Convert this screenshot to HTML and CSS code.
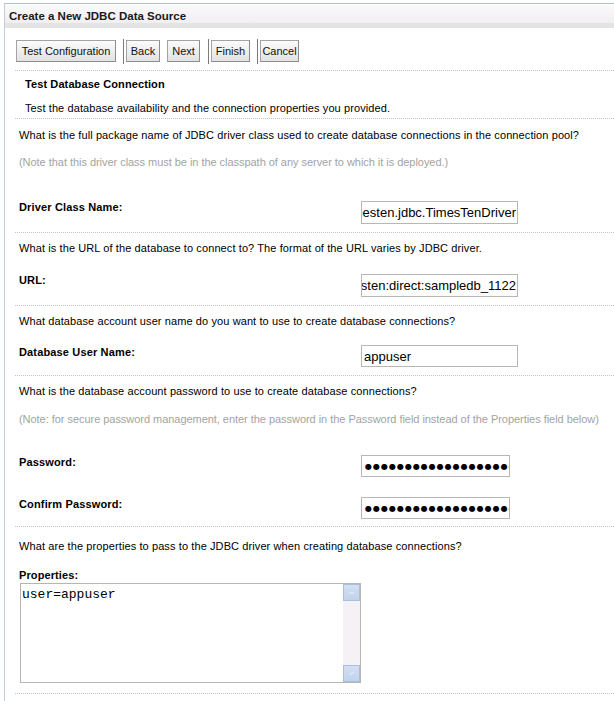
FILE: index.html
```html
<!DOCTYPE html>
<html>
<head>
<meta charset="utf-8">
<link rel="stylesheet" href="styles.css">
</head>
<body>
<div class="panel">
  <div class="titlebar">Create a New JDBC Data Source</div>
  <div class="toolbar">
    <button class="btn w-test">Test Configuration</button>
    <span class="sep"></span>
    <button class="btn w-back">Back</button>
    <button class="btn w-next">Next</button>
    <span class="sep"></span>
    <button class="btn w-finish">Finish</button>
    <span class="sep"></span>
    <button class="btn w-cancel">Cancel</button>
  </div>

  <div class="section intro">
    <div class="line bold">Test Database Connection</div>
    <div class="line gap8">Test the database availability and the connection properties you provided.</div>
  </div>

  <div class="section s1">
    <div class="line">What is the full package name of JDBC driver class used to create database connections in the connection pool?</div>
    <div class="line note gap11">(Note that this driver class must be in the classpath of any server to which it is deployed.)</div>
    <div class="field gap29">
      <div class="label">Driver Class Name:</div>
      <div class="input wide mt2"><span>com.timesten.jdbc.TimesTenDriver</span></div>
    </div>
  </div>

  <div class="section s2">
    <div class="line">What is the URL of the database to connect to? The format of the URL varies by JDBC driver.</div>
    <div class="field gap16">
      <div class="label">URL:</div>
      <div class="input wide mt2"><span>jdbc:timesten:direct:sampledb_1122</span></div>
    </div>
  </div>

  <div class="section s3">
    <div class="line">What database account user name do you want to use to create database connections?</div>
    <div class="field gap15">
      <div class="label">Database User Name:</div>
      <div class="input wide short mt1 left"><span>appuser</span></div>
    </div>
  </div>

  <div class="section s4">
    <div class="line">What is the database account password to use to create database connections?</div>
    <div class="line note gap12">(Note: for secure password management, enter the password in the Password field instead of the Properties field below)</div>
    <div class="field gap27">
      <div class="label">Password:</div>
      <div class="input pw mt1"><span class="dots">●●●●●●●●●●●●●●●●●●●</span></div>
    </div>
    <div class="field gap19">
      <div class="label">Confirm Password:</div>
      <div class="input pw mt1"><span class="dots">●●●●●●●●●●●●●●●●●●●</span></div>
    </div>
  </div>

  <div class="section s5">
    <div class="line">What are the properties to pass to the JDBC driver when creating database connections?</div>
    <div class="line bold gap13">Properties:</div>
    <div class="textarea">
      <div class="ta-text">user=appuser</div>
      <div class="scrollbar">
        <div class="sb-btn"><svg width="15" height="15" viewBox="0 0 15 15"><path d="M5 8h5" stroke="#eef3fb" stroke-width="1"/></svg></div>
        <div class="sb-track"></div>
        <div class="sb-btn"><svg width="15" height="15" viewBox="0 0 15 15"><path d="M6 9l3-3" stroke="#eef3fb" stroke-width="1"/></svg></div>
      </div>
    </div>
  </div>
</div>
</body>
</html>
```

FILE: styles.css
```css
html, body {
  margin: 0;
  padding: 0;
  background: #ffffff;
}
body {
  font-family: "Liberation Sans", Arial, sans-serif;
  font-size: 11px;
  color: #000;
  overflow: hidden;
}
.panel {
  margin: 3px 0 0 4px;
  border-top: 1px solid #b7c3cc;
  border-left: 1px solid #c2ccd5;
  min-height: 700px;
}
.titlebar {
  height: 24px;
  line-height: 24px;
  padding-left: 4px;
  font-weight: bold;
  font-size: 11.5px;
  color: #1a1a1a;
  background: linear-gradient(#fcfcfc 0%, #f6f4f6 35%, #f1eff1 78%, #e4e4e4 79%, #e2e2e2 100%);
}
.toolbar {
  display: flex;
  align-items: flex-start;
  margin-left: 10px;
  padding: 12px 0 0 1px;
  height: 30px;
  border-bottom: 1px dotted #c4c4c4;
}
.btn {
  height: 22px;
  padding: 0;
  font-family: "Liberation Sans", Arial, sans-serif;
  font-size: 11px;
  color: #111;
  border: 1px solid #a3a3a3;
  border-right-color: #8c8c8c;
  border-bottom-color: #8c8c8c;
  background: linear-gradient(#fbfbfb, #ececec 60%, #e2e2e2);
  border-radius: 0;
}
.w-test { width: 100px; margin-right: 7px; }
.w-back { width: 34px; margin-right: 7px; }
.w-next { width: 33px; margin-right: 8px; }
.w-finish { width: 39px; margin-right: 7px; }
.w-cancel { width: 39px; }
.sep {
  width: 1px;
  height: 25px;
  margin-top: -1px;
  margin-right: 2px;
  background: #7a7a7a;
}
.section {
  margin-left: 10px;
  padding-left: 4px;
  border-bottom: 1px dotted #c4c4c4;
  letter-spacing: 0.1px;
}
.line {
  line-height: 17px;
  height: 16px;
  white-space: nowrap;
}
.bold { font-weight: bold; }
.note { color: #a3a3a3; letter-spacing: -0.04px; }
.intro { padding: 5px 0 2px 10px; }
.s1 { padding-top: 8px; padding-bottom: 8px; }
.s2 { padding-top: 7px; padding-bottom: 8px; }
.s3 { padding-top: 7px; padding-bottom: 8px; }
.s4 { padding-top: 7px; padding-bottom: 7px; }
.s5 { padding-top: 11px; padding-bottom: 10px; }
.gap8 { margin-top: 8px; }
.gap11 { margin-top: 11px; }
.gap12 { margin-top: 12px; }
.gap13 { margin-top: 13px; }
.gap15 { margin-top: 15px; }
.gap16 { margin-top: 16px; }
.gap19 { margin-top: 19px; }
.gap27 { margin-top: 27px; }
.gap29 { margin-top: 29px; }
.field {
  display: flex;
  align-items: flex-start;
}
.label {
  width: 342px;
  line-height: 17px;
  height: 16px;
  font-weight: bold;
  letter-spacing: 0.15px;
}
.mt1 { margin-top: 1px; }
.mt2 { margin-top: 2px; }
.input {
  box-sizing: border-box;
  height: 23px;
  border: 1px solid #bab7b2;
  display: flex;
  align-items: center;
  justify-content: flex-end;
  overflow: hidden;
  font-size: 13px;
  letter-spacing: 0;
  white-space: nowrap;
  padding: 0 1px;
}
.input span { flex: none; }
.wide { width: 157px; }
.short { height: 22px; }
.left { justify-content: flex-start; padding-left: 2px; }
.pw {
  width: 149px;
  height: 22px;
  justify-content: flex-start;
  padding-left: 3px;
}
.dots {
  font-family: "DejaVu Sans", sans-serif;
  font-size: 8px;
  letter-spacing: 1px;
}
.textarea {
  box-sizing: border-box;
  width: 341px;
  height: 100px;
  margin-left: 1px;
  border: 1px solid #b8b5b0;
  display: flex;
  letter-spacing: 0;
}
.ta-text {
  flex: 1;
  font-family: "Liberation Mono", "Courier New", monospace;
  font-size: 13px;
  line-height: 15px;
  padding: 3px 0 0 1px;
}
.scrollbar {
  width: 17px;
  display: flex;
  flex-direction: column;
  background: #f5f1f5;
}
.sb-btn {
  box-sizing: border-box;
  height: 17px;
  border: 1px solid #a9bfdf;
  background: linear-gradient(#d3e0f3, #c0d2ec);
}
.sb-btn svg { display: block; }
.sb-track { flex: 1; }
```
